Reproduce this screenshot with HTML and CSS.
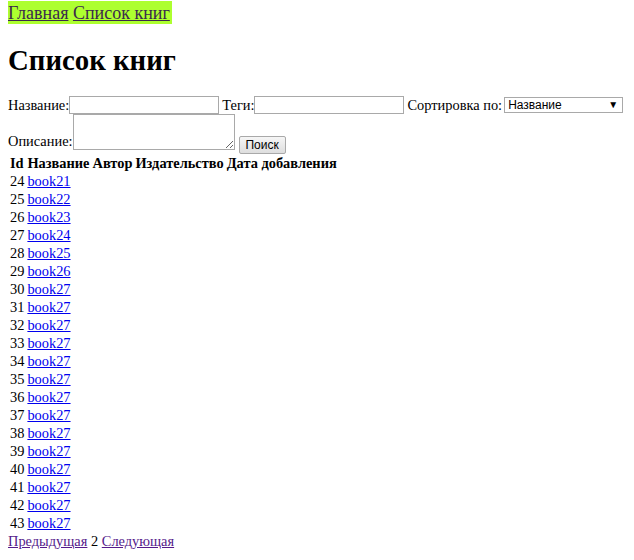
FILE: index.html
```html
<!DOCTYPE html>
<html lang="ru">
<head>
<meta charset="utf-8">
<title>Список книг</title>
<link rel="stylesheet" href="styles.css">
</head>
<body class="page">
<div class="nav"><a class="nav-link" href="#">Главная</a> <a class="nav-link" href="#">Список книг</a></div>
<h1 class="title">Список книг</h1>
<form class="search">
<div class="row row-main"><span class="lbl">Название:</span><input class="field" type="text"><span class="lbl gap">Теги:</span><input class="field" type="text"><span class="lbl gap">Сортировка по:</span><span class="sort"><span class="sort-text">Название</span><span class="sort-arrow">▼</span></span></div>
<div class="row row-desc"><span class="lbl lbl-desc">Описание:</span><textarea class="desc"></textarea><button class="btn" type="button">Поиск</button></div>
</form>
<table class="books">
<thead><tr><th class="cell">Id</th><th class="cell">Название</th><th class="cell">Автор</th><th class="cell">Издательство</th><th class="cell">Дата добавления</th></tr></thead>
<tbody>
<tr><td class="cell">24</td><td class="cell"><a class="book" href="#">book21</a></td></tr>
<tr><td class="cell">25</td><td class="cell"><a class="book" href="#">book22</a></td></tr>
<tr><td class="cell">26</td><td class="cell"><a class="book" href="#">book23</a></td></tr>
<tr><td class="cell">27</td><td class="cell"><a class="book" href="#">book24</a></td></tr>
<tr><td class="cell">28</td><td class="cell"><a class="book" href="#">book25</a></td></tr>
<tr><td class="cell">29</td><td class="cell"><a class="book" href="#">book26</a></td></tr>
<tr><td class="cell">30</td><td class="cell"><a class="book" href="#">book27</a></td></tr>
<tr><td class="cell">31</td><td class="cell"><a class="book" href="#">book27</a></td></tr>
<tr><td class="cell">32</td><td class="cell"><a class="book" href="#">book27</a></td></tr>
<tr><td class="cell">33</td><td class="cell"><a class="book" href="#">book27</a></td></tr>
<tr><td class="cell">34</td><td class="cell"><a class="book" href="#">book27</a></td></tr>
<tr><td class="cell">35</td><td class="cell"><a class="book" href="#">book27</a></td></tr>
<tr><td class="cell">36</td><td class="cell"><a class="book" href="#">book27</a></td></tr>
<tr><td class="cell">37</td><td class="cell"><a class="book" href="#">book27</a></td></tr>
<tr><td class="cell">38</td><td class="cell"><a class="book" href="#">book27</a></td></tr>
<tr><td class="cell">39</td><td class="cell"><a class="book" href="#">book27</a></td></tr>
<tr><td class="cell">40</td><td class="cell"><a class="book" href="#">book27</a></td></tr>
<tr><td class="cell">41</td><td class="cell"><a class="book" href="#">book27</a></td></tr>
<tr><td class="cell">42</td><td class="cell"><a class="book" href="#">book27</a></td></tr>
<tr><td class="cell">43</td><td class="cell"><a class="book" href="#">book27</a></td></tr>
</tbody>
</table>
<div class="pager"><a class="pager-link" href="#">Предыдущая</a> 2 <a class="pager-link" href="#">Следующая</a></div>
</body>
</html>
```
FILE: styles.css
```css
.page {
  margin: 0 8px 8px 8px;
  font-family: "Liberation Serif", "Times New Roman", serif;
  font-size: 14.4px;
  line-height: 18px;
  color: #000;
  background: #fff;
}
.nav {
  display: inline-block;
  background: #adff2f;
  margin: 1px 0 0 -2px;
  padding: 2px 2px 1px 2px;
  font-size: 18px;
  line-height: 20px;
}
.nav-link {
  color: #3b2a4c;
}
.title {
  font-size: 28.8px;
  line-height: 33px;
  font-weight: bold;
  margin: 20px 0 19px 0;
}
.search {
  margin: 0;
}
.row {
  display: flex;
  white-space: nowrap;
}
.row-main {
  align-items: center;
  height: 18px;
}
.row-desc {
  align-items: flex-end;
}
.gap {
  margin-left: 3px;
}
.field {
  box-sizing: border-box;
  width: 150px;
  height: 18px;
  padding: 1px 2px;
  border: 1px solid #a9a9a9;
  font-family: "Liberation Sans", Arial, sans-serif;
  font-size: 12px;
  margin: 0;
}
.sort {
  box-sizing: border-box;
  display: flex;
  align-items: center;
  justify-content: space-between;
  width: 119px;
  height: 16px;
  margin-left: 2px;
  padding: 0 4px 0 3px;
  border: 1px solid #a9a9a9;
  background: #fff;
  font-family: "Liberation Sans", Arial, sans-serif;
  font-size: 12px;
  line-height: 14px;
}
.sort-arrow {
  font-size: 10px;
}
.lbl-desc {
  margin-bottom: 4px;
}
.desc {
  box-sizing: border-box;
  width: 162px;
  height: 36px;
  border: 1px solid #a9a9a9;
  padding: 1px;
  margin: 0 0 4px 0;
  resize: both;
  font-family: "Liberation Mono", monospace;
  font-size: 12px;
}
.btn {
  box-sizing: border-box;
  font-family: "Liberation Sans", Arial, sans-serif;
  font-size: 12px;
  width: 47px;
  height: 18px;
  padding: 0;
  margin-left: 4px;
  border: 1px solid #a9a9a9;
  border-radius: 2px;
  background: linear-gradient(#f6f6f6, #dedede);
  color: #000;
}
.books {
  border-collapse: separate;
  border-spacing: 1px 0;
  margin: 0;
}
.cell {
  padding: 0 1px;
  text-align: left;
  line-height: 18px;
}
.book {
  color: #0000ee;
}
.pager-link {
  color: #551a8b;
}
```
